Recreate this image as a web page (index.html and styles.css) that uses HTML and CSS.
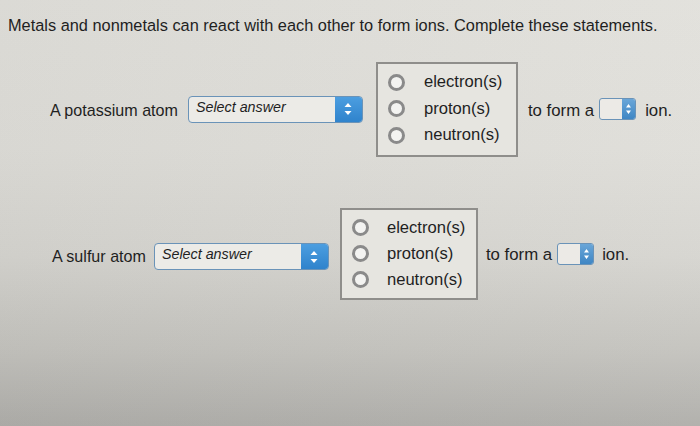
FILE: index.html
```html
<!DOCTYPE html>
<html>
<head>
<meta charset="utf-8">
<link rel="stylesheet" href="styles.css">
</head>
<body>
<div class="page">
  <p class="title">Metals and nonmetals can react with each other to form ions. Complete these statements.</p>

  <div class="row row-k">
    <span class="label">A potassium atom</span>
    <div class="select">
      <span class="select-text">Select answer</span>
      <span class="select-btn">
        <svg width="10" height="14" viewBox="0 0 10 14"><path d="M5 1 L8.5 5 H1.5 Z M5 13 L8.5 9 H1.5 Z" fill="#fff"/></svg>
      </span>
    </div>
    <div class="radios radios-k">
      <div class="opt"><span class="circle"></span><span>electron(s)</span></div>
      <div class="opt"><span class="circle"></span><span>proton(s)</span></div>
      <div class="opt"><span class="circle"></span><span>neutron(s)</span></div>
    </div>
    <span class="form">to form a</span>
    <div class="mini">
      <span class="mini-field"></span>
      <span class="mini-btn">
        <svg width="7" height="12" viewBox="0 0 7 12"><path d="M3.5 1 L6 4.5 H1 Z M3.5 11 L6 7.5 H1 Z" fill="#fff"/></svg>
      </span>
    </div>
    <span class="ion">ion.</span>
  </div>

  <div class="row row-s">
    <span class="label">A sulfur atom</span>
    <div class="select">
      <span class="select-text">Select answer</span>
      <span class="select-btn">
        <svg width="10" height="14" viewBox="0 0 10 14"><path d="M5 1 L8.5 5 H1.5 Z M5 13 L8.5 9 H1.5 Z" fill="#fff"/></svg>
      </span>
    </div>
    <div class="radios radios-s">
      <div class="opt"><span class="circle"></span><span>electron(s)</span></div>
      <div class="opt"><span class="circle"></span><span>proton(s)</span></div>
      <div class="opt"><span class="circle"></span><span>neutron(s)</span></div>
    </div>
    <span class="form">to form a</span>
    <div class="mini">
      <span class="mini-field"></span>
      <span class="mini-btn">
        <svg width="7" height="12" viewBox="0 0 7 12"><path d="M3.5 1 L6 4.5 H1 Z M3.5 11 L6 7.5 H1 Z" fill="#fff"/></svg>
      </span>
    </div>
    <span class="ion">ion.</span>
  </div>
</div>
</body>
</html>
```

FILE: styles.css
```css
html, body {
  margin: 0;
  padding: 0;
}
body {
  width: 700px;
  height: 426px;
  overflow: hidden;
  font-family: "Liberation Sans", Arial, sans-serif;
  color: #1f1f1f;
  background:
    linear-gradient(100deg, rgba(0,0,0,0.03) 0%, rgba(255,255,255,0.04) 100%),
    linear-gradient(180deg, #e2e1dc 0%, #dfded9 35%, #d6d5d0 60%, #c4c3be 82%, #afaeaa 100%);
}
.page {
  height: 426px;
}
.title {
  margin: 0;
  padding: 16px 0 0 8px;
  font-size: 16.35px;
  line-height: 19px;
  white-space: nowrap;
}
.row {
  display: flex;
  align-items: center;
}
.row-k {
  margin-top: 27px;
  padding-left: 50px;
}
.row-s {
  margin-top: 51px;
  padding-left: 52px;
}
.label {
  font-size: 16.1px;
  margin-right: 10px;
  white-space: nowrap;
  padding-top: 3px;
}
.row-s .label {
  margin-right: 8px;
  padding-top: 5px;
}
.select {
  display: flex;
  flex: none;
  width: 175px;
  height: 27px;
  box-sizing: border-box;
  border: 1.5px solid #6a93b8;
  border-radius: 4px;
  background: #ecebe7;
  overflow: hidden;
}
.row-s .select {
  margin-top: 6px;
}
.select-text {
  flex: 1;
  font-style: italic;
  font-size: 14.3px;
  line-height: 21px;
  padding-left: 7px;
}
.select-btn {
  width: 27px;
  display: flex;
  align-items: center;
  justify-content: center;
  background: linear-gradient(180deg, #4c9ee0 0%, #2f83cc 100%);
}
.radios {
  flex: none;
  box-sizing: border-box;
  border: 2px solid #8f8e8b;
  background: #e6e5e0;
  padding: 5px 10px 6px 10px;
  margin-left: 13px;
  margin-right: 10px;
}
.radios-k {
  width: 142px;
}
.radios-s {
  width: 138px;
  margin-left: 11px;
  margin-right: 8px;
  padding-bottom: 5px;
}
.opt {
  display: flex;
  align-items: center;
  height: 26.5px;
  font-size: 16.6px;
  white-space: nowrap;
}
.radios-s .opt {
  height: 26px;
}
.circle {
  width: 17px;
  height: 17px;
  box-sizing: border-box;
  border: 3px solid #8a8a8a;
  border-radius: 50%;
  background: #f3f3f1;
  margin-right: 19px;
  flex: none;
}
.radios-s .circle {
  margin-right: 18px;
}
.form {
  font-size: 16.8px;
  white-space: nowrap;
  margin-right: 5px;
  padding-top: 3px;
}
.mini {
  display: flex;
  flex: none;
  width: 37px;
  height: 22px;
  box-sizing: border-box;
  border: 1.5px solid #6a93b8;
  border-radius: 3px;
  background: #eceae6;
  overflow: hidden;
}
.mini-field {
  flex: 1;
}
.mini-btn {
  width: 13px;
  display: flex;
  align-items: center;
  justify-content: center;
  background: linear-gradient(180deg, #6aa6d8 0%, #3f86c4 100%);
}
.ion {
  font-size: 16.8px;
  margin-left: 9px;
  padding-top: 3px;
}
.row-s .ion {
  margin-left: 8px;
}
```
